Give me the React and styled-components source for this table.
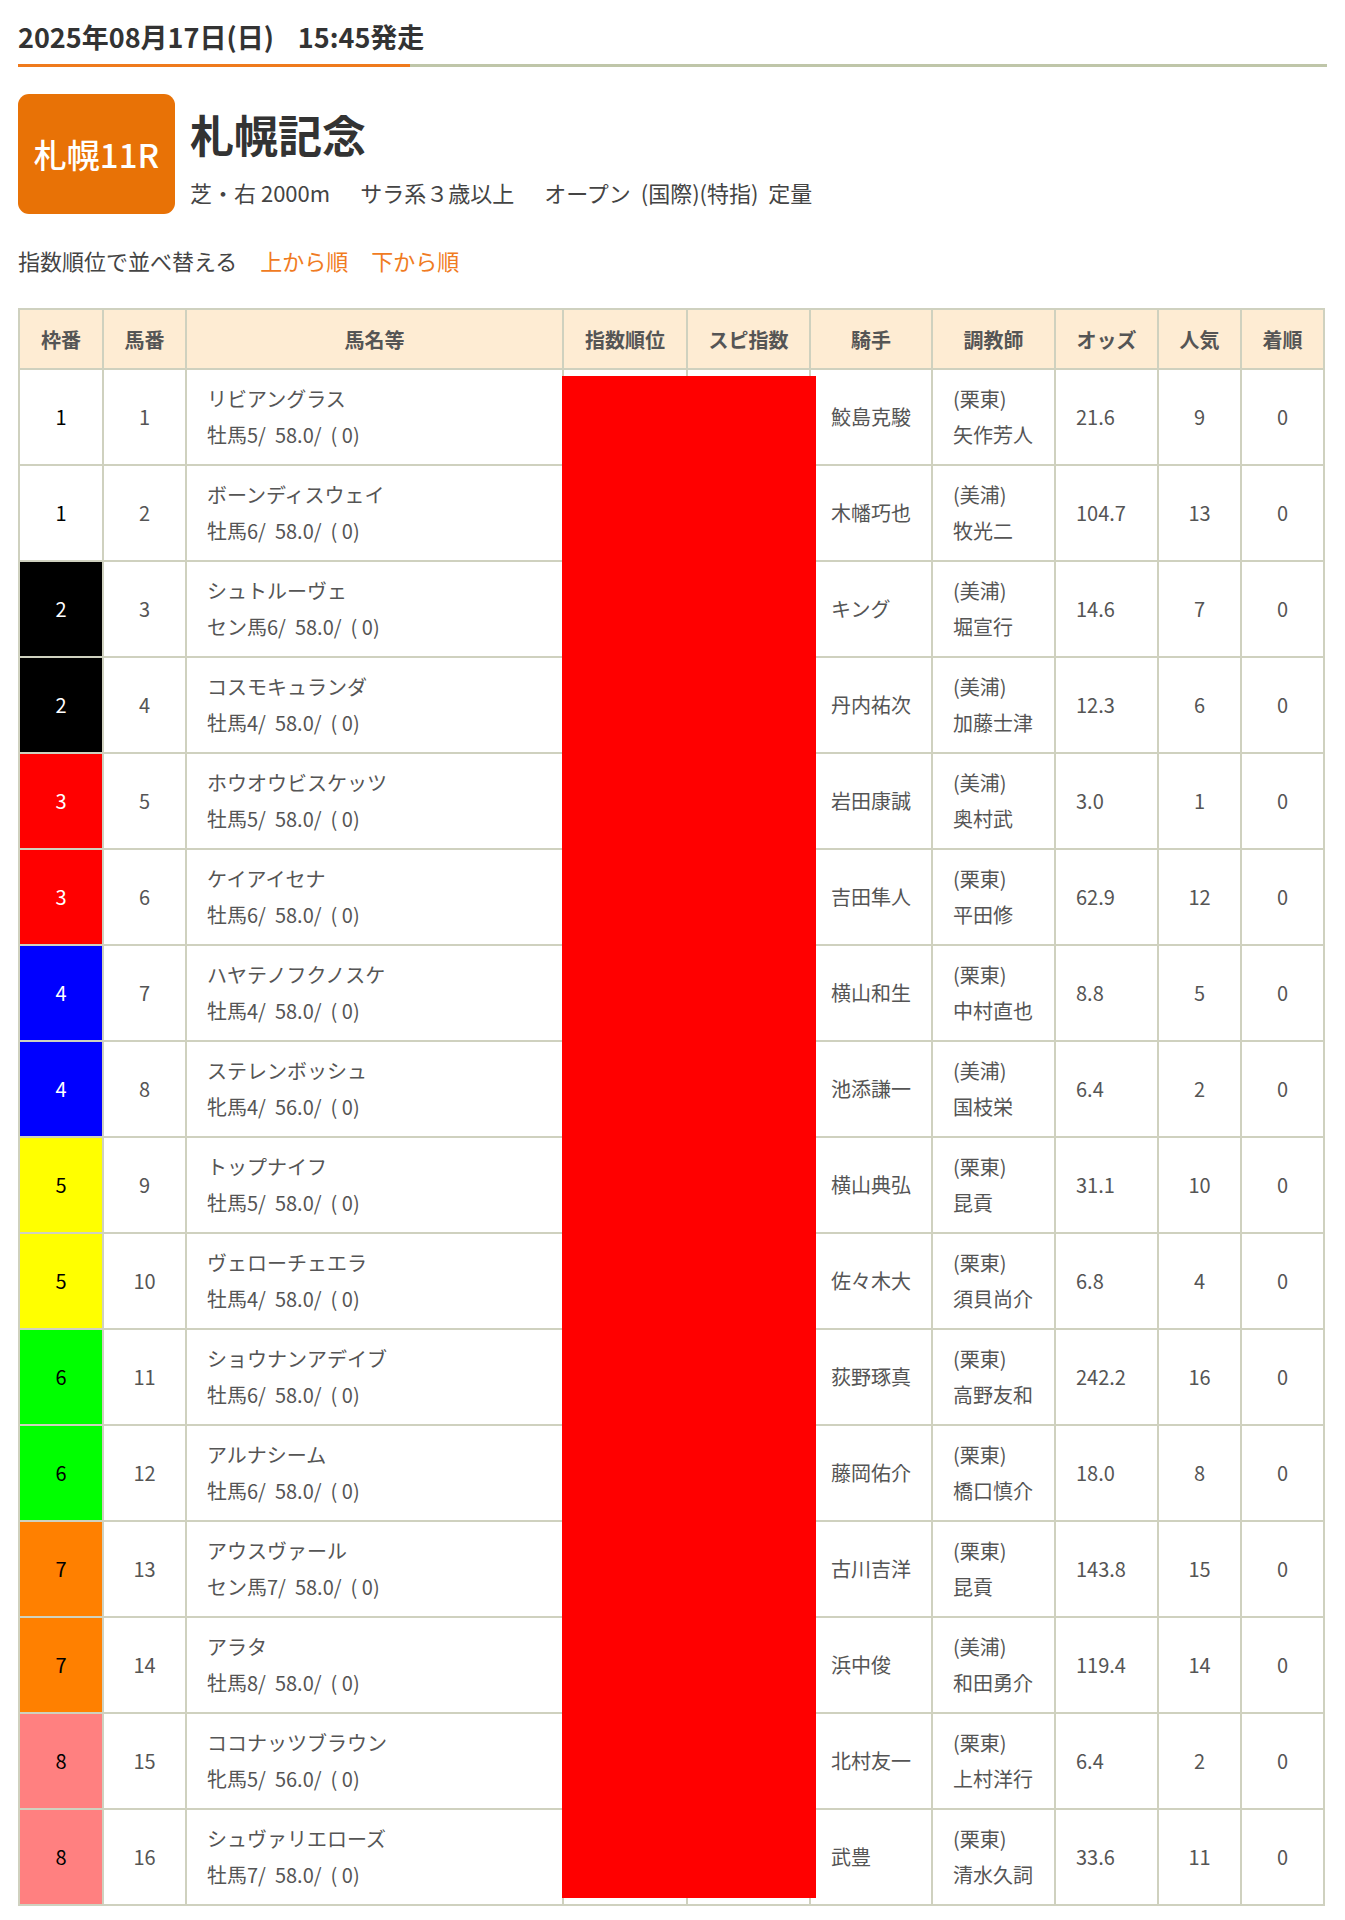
import React from 'react';
import styled, { createGlobalStyle } from 'styled-components';

const GlobalStyle = createGlobalStyle`
  body {
    margin: 0;
    background: #fff;
    font-family: "Noto Sans CJK JP", "Noto Sans", sans-serif;
    color: #555;
  }
`;

const Page = styled.div`
  padding: 0 18px 20px;
`;

const DateBar = styled.h2`
  position: relative;
  margin: 0;
  padding: 18px 0 8px;
  font-size: 27px;
  font-weight: 700;
  line-height: 38px;
  color: #333;
  border-bottom: 3px solid #bfc6a9;
  &::after {
    content: '';
    position: absolute;
    left: 0;
    bottom: -3px;
    width: 392px;
    height: 3px;
    background: #ef7a1c;
  }
`;

const Time = styled.span`
  margin-left: 24px;
`;

const RaceHead = styled.div`
  display: flex;
  align-items: flex-start;
  gap: 15px;
  margin-top: 27px;
`;

const RaceBadge = styled.div`
  width: 157px;
  height: 120px;
  border-radius: 11px;
  background: #e87206;
  color: #fff;
  font-size: 33px;
  font-weight: 500;
  display: flex;
  align-items: center;
  justify-content: center;
`;

const RaceInfo = styled.div`
  display: flex;
  flex-direction: column;
`;

const RaceName = styled.h1`
  margin: 12px 0 0;
  font-size: 44px;
  font-weight: 700;
  line-height: 56px;
  color: #333;
`;

const Conditions = styled.div`
  display: flex;
  gap: 30px;
  margin-top: 14px;
  font-size: 22px;
  line-height: 32px;
  color: #444;
  white-space: pre;
`;

const SortLine = styled.div`
  display: flex;
  gap: 23px;
  margin-top: 30px;
  font-size: 22px;
  line-height: 32px;
  color: #444;
`;

const SortLink = styled.a`
  color: #f07b22;
  text-decoration: none;
  cursor: pointer;
`;

const TableWrap = styled.div`
  position: relative;
  margin-top: 32px;
`;

const Table = styled.table`
  width: 1307px;
  table-layout: fixed;
  border-collapse: collapse;
  border: 2px solid #cfd1bf;
  font-size: 20px;
`;

const Th = styled.th`
  height: 58px;
  padding: 0;
  background: #feecd3;
  border: 2px solid #cfd1bf;
  font-weight: 700;
  color: #555;
  text-align: center;
`;

const Td = styled.td`
  height: 94px;
  padding: 0 0 0 ${p => (p.$center ? 0 : 20)}px;
  border: 2px solid #cfd1bf;
  text-align: ${p => (p.$center ? 'center' : 'left')};
  color: #555;
  line-height: 36px;
  white-space: pre;
`;

const FRAME = {
  1: ['#ffffff', '#000'],
  2: ['#000000', '#fff'],
  3: ['#ff0000', '#fff'],
  4: ['#0000ff', '#fff'],
  5: ['#ffff00', '#000'],
  6: ['#00ff00', '#000'],
  7: ['#ff8000', '#000'],
  8: ['#ff8080', '#000'],
};

const FrameTd = styled(Td)`
  background: ${p => FRAME[p.$frame][0]};
  color: ${p => FRAME[p.$frame][1]};
`;

const Line = styled.div``;

const Blocked = styled.div`
  position: absolute;
  left: 544px;
  top: 68px;
  width: 254px;
  height: 1522px;
  background: #ff0000;
`;

const widths = [84, 83, 377, 124, 123, 122, 123, 103, 83, 83];
const heads = ['枠番', '馬番', '馬名等', '指数順位', 'スピ指数', '騎手', '調教師', 'オッズ', '人気', '着順'];

const horses = [
  [1, 1, 'リビアングラス', '牡馬5', '58.0', '鮫島克駿', '(栗東)', '矢作芳人', '21.6', 9],
  [1, 2, 'ボーンディスウェイ', '牡馬6', '58.0', '木幡巧也', '(美浦)', '牧光二', '104.7', 13],
  [2, 3, 'シュトルーヴェ', 'セン馬6', '58.0', 'キング', '(美浦)', '堀宣行', '14.6', 7],
  [2, 4, 'コスモキュランダ', '牡馬4', '58.0', '丹内祐次', '(美浦)', '加藤士津', '12.3', 6],
  [3, 5, 'ホウオウビスケッツ', '牡馬5', '58.0', '岩田康誠', '(美浦)', '奥村武', '3.0', 1],
  [3, 6, 'ケイアイセナ', '牡馬6', '58.0', '吉田隼人', '(栗東)', '平田修', '62.9', 12],
  [4, 7, 'ハヤテノフクノスケ', '牡馬4', '58.0', '横山和生', '(栗東)', '中村直也', '8.8', 5],
  [4, 8, 'ステレンボッシュ', '牝馬4', '56.0', '池添謙一', '(美浦)', '国枝栄', '6.4', 2],
  [5, 9, 'トップナイフ', '牡馬5', '58.0', '横山典弘', '(栗東)', '昆貢', '31.1', 10],
  [5, 10, 'ヴェローチェエラ', '牡馬4', '58.0', '佐々木大', '(栗東)', '須貝尚介', '6.8', 4],
  [6, 11, 'ショウナンアデイブ', '牡馬6', '58.0', '荻野琢真', '(栗東)', '高野友和', '242.2', 16],
  [6, 12, 'アルナシーム', '牡馬6', '58.0', '藤岡佑介', '(栗東)', '橋口慎介', '18.0', 8],
  [7, 13, 'アウスヴァール', 'セン馬7', '58.0', '古川吉洋', '(栗東)', '昆貢', '143.8', 15],
  [7, 14, 'アラタ', '牡馬8', '58.0', '浜中俊', '(美浦)', '和田勇介', '119.4', 14],
  [8, 15, 'ココナッツブラウン', '牝馬5', '56.0', '北村友一', '(栗東)', '上村洋行', '6.4', 2],
  [8, 16, 'シュヴァリエローズ', '牡馬7', '58.0', '武豊', '(栗東)', '清水久詞', '33.6', 11],
];

export default function App() {
  return (
    <Page>
      <GlobalStyle />
      <DateBar>
        2025年08月17日(日)<Time>15:45発走</Time>
      </DateBar>

      <RaceHead>
        <RaceBadge>札幌11R</RaceBadge>
        <RaceInfo>
          <RaceName>札幌記念</RaceName>
          <Conditions>
            <span>芝・右 2000m</span>
            <span>サラ系３歳以上</span>
            <span>{'オープン  (国際)(特指)  定量'}</span>
          </Conditions>
        </RaceInfo>
      </RaceHead>

      <SortLine>
        <span>指数順位で並べ替える</span>
        <SortLink>上から順</SortLink>
        <SortLink>下から順</SortLink>
      </SortLine>

      <TableWrap>
        <Table>
          <colgroup>
            {widths.map((w, i) => <col key={i} style={{ width: w }} />)}
          </colgroup>
          <thead>
            <tr>
              {heads.map(h => <Th key={h}>{h}</Th>)}
            </tr>
          </thead>
          <tbody>
            {horses.map(h => (
              <tr key={h[1]}>
                <FrameTd $center $frame={h[0]}>{h[0]}</FrameTd>
                <Td $center>{h[1]}</Td>
                <Td>
                  <Line>{h[2]}</Line>
                  <Line>{`${h[3]}/  ${h[4]}/  ( 0)`}</Line>
                </Td>
                <Td />
                <Td />
                <Td>{h[5]}</Td>
                <Td>
                  <Line>{h[6]}</Line>
                  <Line>{h[7]}</Line>
                </Td>
                <Td>{h[8]}</Td>
                <Td $center>{h[9]}</Td>
                <Td $center>0</Td>
              </tr>
            ))}
          </tbody>
        </Table>
        <Blocked />
      </TableWrap>
    </Page>
  );
}
